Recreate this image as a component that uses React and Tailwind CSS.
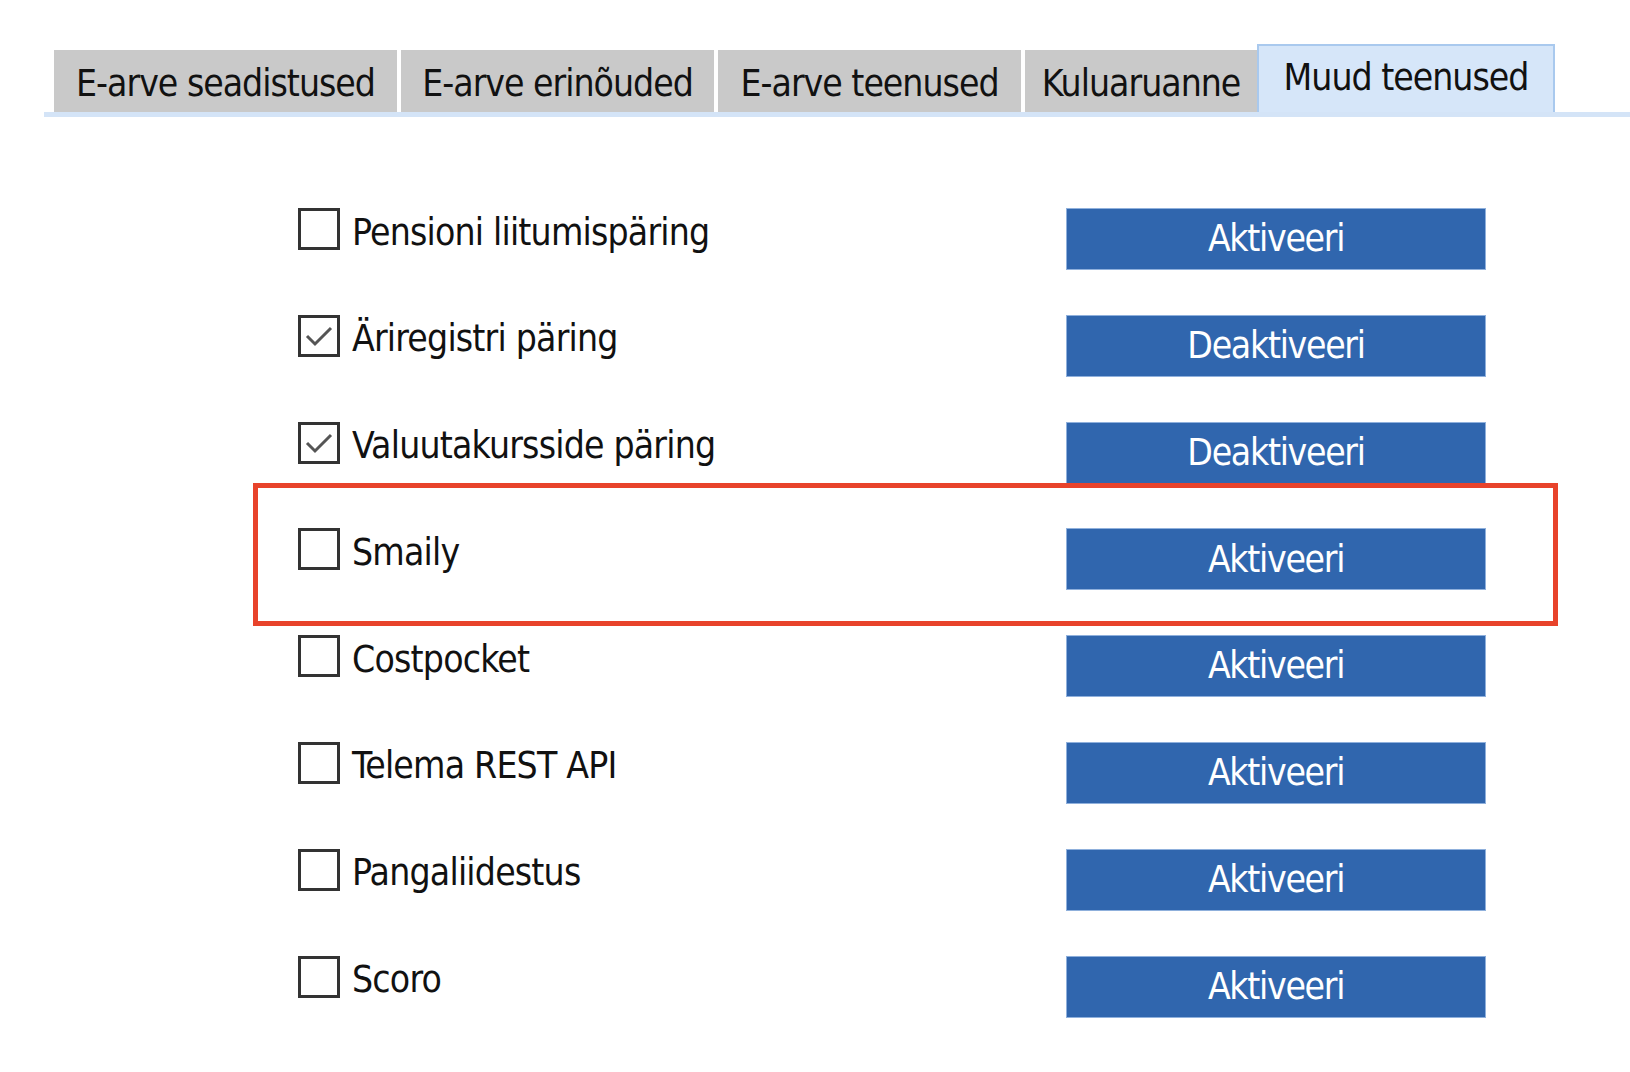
import React from "react";

const tabs = [
  { label: "E-arve seadistused", w: "w-[343px]" },
  { label: "E-arve erinõuded", w: "w-[313px]" },
  { label: "E-arve teenused", w: "w-[303px]" },
  { label: "Kuluaruanne", w: "w-[232px]" },
];

const services = [
  { name: "Pensioni liitumispäring", active: false },
  { name: "Äriregistri päring", active: true },
  { name: "Valuutakursside päring", active: true },
  { name: "Smaily", active: false },
  { name: "Costpocket", active: false },
  { name: "Telema REST API", active: false },
  { name: "Pangaliidestus", active: false },
  { name: "Scoro", active: false },
];

const font = { fontFamily: "Tahoma, 'DejaVu Sans Condensed', 'Liberation Sans', sans-serif" };

const Checkbox = ({ checked }) => (
  <div className="w-[42px] h-[42px] border-[3px] border-[#333333] bg-white flex items-center justify-center shrink-0">
    {checked && (
      <svg width="30" height="24" viewBox="0 0 30 24">
        <path d="M3 12 L11 20 L27 4" fill="none" stroke="#555555" strokeWidth="3" />
      </svg>
    )}
  </div>
);

export default function App() {
  return (
    <div className="w-[1630px] h-[1072px] bg-white overflow-hidden relative text-[#111111]" style={font}>
      {/* Tabs */}
      <div className="mt-[44px] ml-[44px] border-b-[5px] border-[#d4e4f7] flex items-end pl-[10px]">
        {tabs.map((t) => (
          <div
            key={t.label}
            className={`${t.w} h-[62px] mr-[4px] bg-[#c9c9c9] flex items-center justify-center pt-[6px] text-[37px] tracking-[-1px]`}
          >
            {t.label}
          </div>
        ))}
        <div className="-ml-[4px] w-[298px] h-[68px] bg-[#d6e6f9] border-x-2 border-t-2 border-[#a9c9ee] flex items-start justify-center pt-[4px] text-[37px] tracking-[-1px]">
          Muud teenused
        </div>
      </div>

      {/* Service rows */}
      <div className="mt-[91px] ml-[298px] flex flex-col">
        {services.map((s) => (
          <div key={s.name} className="h-[106.8px] flex items-start">
            <div className="w-[768px] flex items-center h-[42px]">
              <Checkbox checked={s.active} />
              <span className="ml-[12px] pt-[6px] text-[37px] tracking-[-0.8px] leading-none">{s.name}</span>
            </div>
            <button className="w-[420px] h-[62px] bg-[#3066ae] border border-[#8fb0dc] text-white text-[37px] tracking-[-1.3px] flex items-center justify-center">
              {s.active ? "Deaktiveeri" : "Aktiveeri"}
            </button>
          </div>
        ))}
      </div>

      {/* Highlight annotation */}
      <div className="absolute left-[253px] top-[483px] w-[1305px] h-[143px] border-[5px] border-[#e8432b] pointer-events-none" />
    </div>
  );
}
